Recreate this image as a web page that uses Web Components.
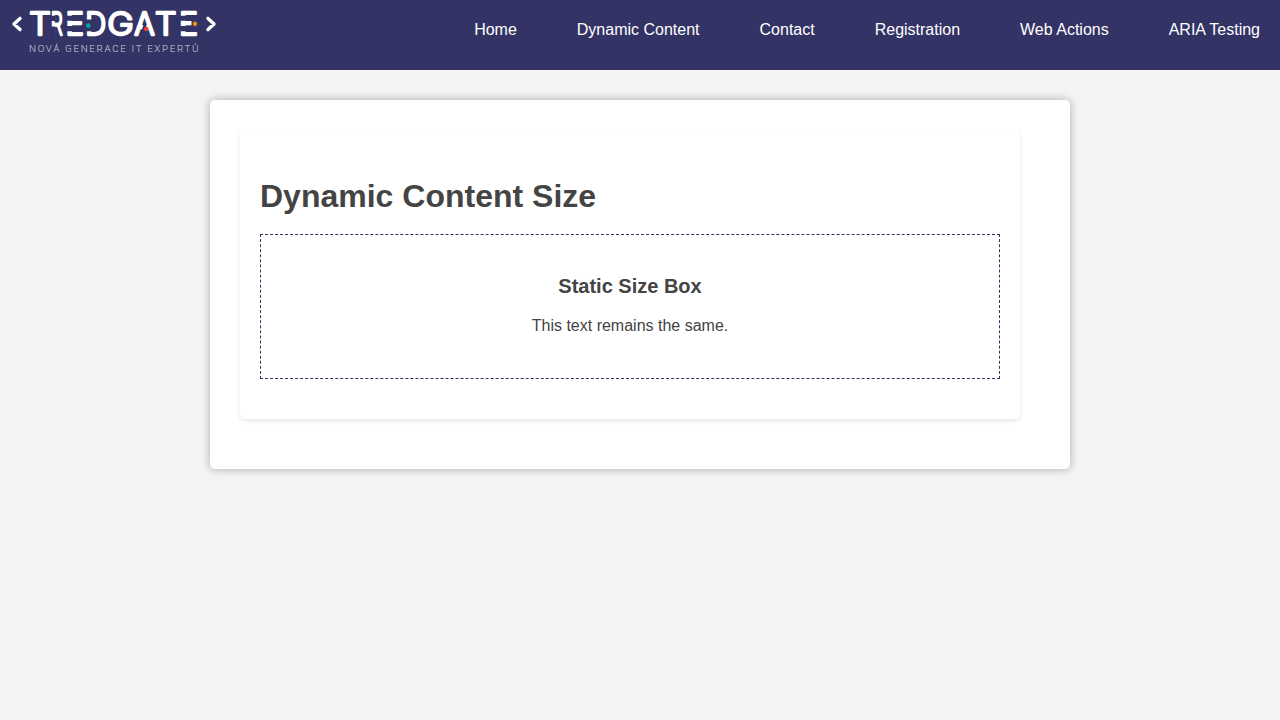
<!DOCTYPE html>
<html lang="en">
<head>
<meta charset="utf-8">
<title>Dynamic Content</title>
<style>
html{background:#f4f4f4}
body{margin:0;min-height:100vh;background:#f4f4f4;color:#444;font:16px/19px "Liberation Sans",Arial,sans-serif}
</style>
</head>
<body>
<site-header>
  <brand-logo slot="logo"></brand-logo>
  <nav-link>Home</nav-link><nav-link>Dynamic Content</nav-link><nav-link>Contact</nav-link><nav-link>Registration</nav-link><nav-link>Web Actions</nav-link><nav-link>ARIA Testing</nav-link>
</site-header>
<page-container>
  <content-section>
    <span slot="title">Dynamic Content Size</span>
    <size-box><span slot="title">Static Size Box</span>This text remains the same.</size-box>
  </content-section>
</page-container>
<script>
const define = (name, html) => customElements.define(name, class extends HTMLElement {
  constructor() {
    super();
    this.attachShadow({mode: 'open'}).innerHTML = html;
  }
});
define('site-header', `<style>
:host{display:flex;justify-content:space-between;align-items:flex-start;height:70px;background:#333366;color:#fff}
nav{display:flex;gap:60px;padding:20px 20px 0 0}
</style><slot name="logo"></slot><nav><slot></slot></nav>`);
define('nav-link', `<style>
:host{display:block}
a{color:inherit;text-decoration:none;white-space:nowrap}
</style><a href="#"><slot></slot></a>`);
define('brand-logo', `<style>
:host{display:block;width:230px;height:70px}
svg{display:block}
.name{font:300 31.5px Inter,sans-serif;fill:#fff;stroke:#fff;stroke-width:2.3;stroke-linejoin:round}
.tag{font:300 9.8px Roboto,sans-serif;fill:#d0d0de}
.cut{fill:#333366}
.chev{fill:none;stroke:#fff;stroke-width:3.4;stroke-linecap:round;stroke-linejoin:round}
</style><svg width="230" height="70" viewBox="0 0 230 70">
<path class="chev" d="M20 18.4 14 24 20 29.6M208 18.4 214 24 208 29.6"/>
<text class="name" y="34.8"><tspan x="29.3" textLength="21.5" lengthAdjust="spacingAndGlyphs">T</tspan><tspan x="50.8" textLength="12" lengthAdjust="spacingAndGlyphs">R</tspan><tspan x="65.6" textLength="18.5" lengthAdjust="spacingAndGlyphs">E</tspan><tspan x="85.3" textLength="21" lengthAdjust="spacingAndGlyphs">D</tspan><tspan x="107.3" textLength="26.5" lengthAdjust="spacingAndGlyphs">G</tspan><tspan x="134.3" textLength="20.5" lengthAdjust="spacingAndGlyphs">A</tspan><tspan x="155" textLength="21.5" lengthAdjust="spacingAndGlyphs">T</tspan><tspan x="179" textLength="19" lengthAdjust="spacingAndGlyphs">E</tspan></text>
<path class="cut" d="M50 15.8h5v5.2h-5zM50 26.5h5v11h-5zM65.5 15.8h8v5h-8zM65.5 26h8v5.3h-8zM85.5 19.5h7.9v11.8H85.5zM178.5 15.8h8.5v5h-8.5zM178.5 26h8.5v5.3h-8.5zM141.2 32.5l2.6-9h1.8l2.6 9z"/>
<circle cx="88.3" cy="25.6" r="2.3" fill="#00a99d"/>
<circle cx="146.2" cy="29" r="2.3" fill="#e84133"/>
<path class="cut" d="M191.5 18h8v13h-8z"/>
<circle cx="195" cy="23.7" r="2.2" fill="#f39200"/>
<text class="tag" x="29" y="52" textLength="169.5">NOVÁ GENERACE IT EXPERTŮ</text>
</svg>`);
define('page-container', `<style>
:host{display:block;box-sizing:border-box;width:860px;height:369px;margin:30px auto 0;padding:30px 50px 50px 30px;background:#fff;border-radius:5px;box-shadow:0 0 10px rgba(0,0,0,.3)}
</style><slot></slot>`);
define('content-section', `<style>
:host{display:block;box-sizing:border-box;height:289px;padding:48px 20px 40px;border-radius:5px;box-shadow:0 2px 4px rgba(0,0,0,.1)}
h1{margin:0 0 19px;font-size:32px;line-height:37px}
</style><h1><slot name="title"></slot></h1><slot></slot>`);
define('size-box', `<style>
:host{display:block;box-sizing:border-box;height:145px;padding:39px 20px;border:1px dashed #333366;text-align:center}
h2{margin:0 0 18px;font-size:20px;line-height:24px}
p{margin:0}
</style><h2><slot name="title"></slot></h2><p><slot></slot></p>`);
</script>
</body>
</html>
